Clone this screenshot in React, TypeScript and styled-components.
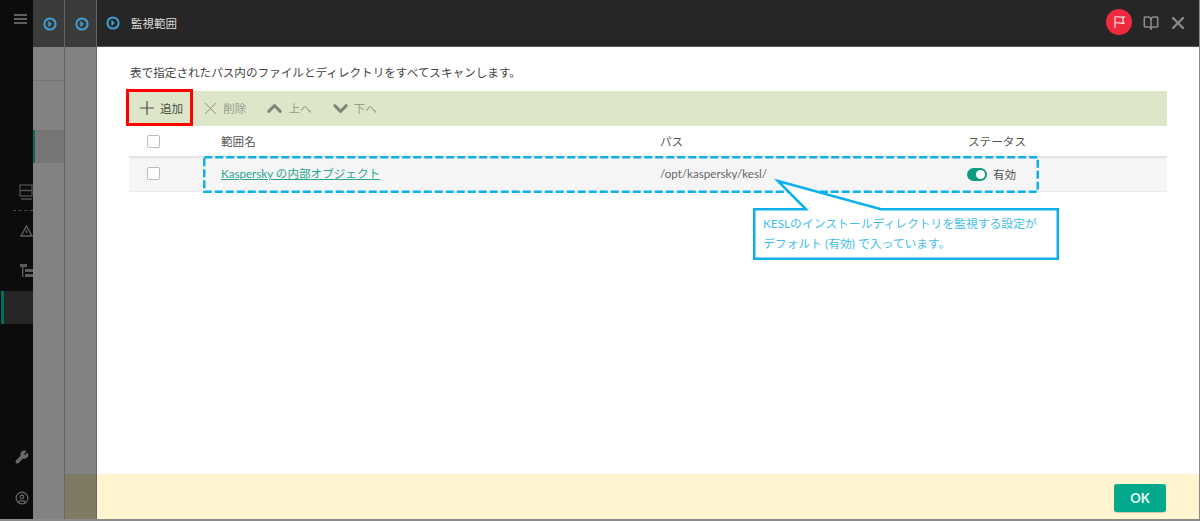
import { ReactElement } from 'react'
import styled, { createGlobalStyle } from 'styled-components'
import { BookOpen, ChevronDown, ChevronUp, CircleUser, Plus, Wrench, X } from 'lucide-react'

const fontStack = `"Lato", "Noto Sans CJK JP", sans-serif`

function PanelIcon(): ReactElement {
  return (
    <svg width="14" height="14" viewBox="0 0 14 14" fill="none">
      <circle cx="7" cy="7" r="5.6" stroke="#3f9fd4" strokeWidth="2" />
      <path d="M5.8 4.6 8.3 7 5.8 9.4Z" fill="#3f9fd4" stroke="#3f9fd4" strokeWidth="0.8" />
    </svg>
  )
}

function App(): ReactElement {
  return (
    <Screen>
      <GlobalStyle />
      <Sidebar>
        <Hamburger />
        <SideGlyphs>
          <svg width="14" height="17" viewBox="0 0 14 17" fill="none" stroke="#505050" strokeWidth="1.3">
            <rect x="1" y="1" width="12" height="11" />
            <path d="M1 6.5h12M2 15h11" />
          </svg>
          <DottedRule />
          <svg width="13" height="12" viewBox="0 0 13 12" fill="none" stroke="#5c5c5c" strokeWidth="1.4">
            <path d="M6.5 1 12 11H1Z" />
            <path d="M6.5 5v3" />
          </svg>
          <svg width="13" height="14" viewBox="0 0 13 14" fill="#5c5c5c">
            <rect x="0" y="0" width="7" height="3" />
            <rect x="2" y="3" width="1.4" height="10" />
            <rect x="5" y="5" width="8" height="3" />
            <rect x="5" y="10" width="8" height="3" />
          </svg>
        </SideGlyphs>
        <SideActive />
        <SideFooter>
          <Wrench size={14} color="#6a6a6a" fill="#6a6a6a" />
          <CircleUser size={14} color="#6a6a6a" />
        </SideFooter>
      </Sidebar>

      <StackPanel>
        <StackHeader>
          <PanelIcon />
        </StackHeader>
        <StackBody>
          <StackRule />
          <StackActive />
        </StackBody>
      </StackPanel>

      <StackPanel>
        <StackHeader>
          <PanelIcon />
        </StackHeader>
        <StackBody />
        <StackFooter />
      </StackPanel>

      <Dialog>
        <Header>
          <PanelIcon />
          <Title>監視範囲</Title>
          <HeaderActions>
            <FlagBadge>
              <svg width="13" height="14" viewBox="0 0 13 14" fill="none" stroke="#ffd6da" strokeWidth="1.3">
                <path d="M2 13V2c3-1.2 5 1 9 0l-1.6 3L11 8c-4 1-6-1.2-9 0" />
              </svg>
            </FlagBadge>
            <BookOpen size={16} color="#8b8b8b" strokeWidth={2.4} />
            <CloseGlyph size={20} color="#8b8b8b" strokeWidth={2.8} />
          </HeaderActions>
        </Header>

        <Content>
          <Intro>表で指定されたパス内のファイルとディレクトリをすべてスキャンします。</Intro>
          <Toolbar>
            <ToolButton>
              <Plus size={22} strokeWidth={1.3} />
              追加
            </ToolButton>
            <ToolButton $disabled>
              <X size={21} strokeWidth={1.2} />
              削除
            </ToolButton>
            <ToolButton $disabled>
              <ChevronUp size={23} strokeWidth={3} color="#7f8578" />
              上へ
            </ToolButton>
            <ToolButton $disabled>
              <ChevronDown size={23} strokeWidth={3} color="#7f8578" />
              下へ
            </ToolButton>
          </Toolbar>
          <HeadRow>
            <CheckCell>
              <CheckBox />
            </CheckCell>
            <span>範囲名</span>
            <span>パス</span>
            <span>ステータス</span>
          </HeadRow>
          <BodyRow>
            <CheckCell>
              <CheckBox />
            </CheckCell>
            <ScopeLink>Kaspersky の内部オブジェクト</ScopeLink>
            <span>/opt/kaspersky/kesl/</span>
            <StatusCell>
              <Toggle />
              有効
            </StatusCell>
          </BodyRow>
        </Content>

        <Footer>
          <OkButton>OK</OkButton>
        </Footer>
      </Dialog>

      <RedFrame />
      <DashedFrame width="836" height="37" viewBox="0 0 836 37">
        <rect x="1.25" y="1.25" width="833.5" height="34.5" fill="none" stroke="#0eb0ec" strokeWidth="2.5" strokeDasharray="8 3" />
      </DashedFrame>
      <CalloutShape width="312" height="84" viewBox="0 0 312 84">
        <path
          d="M28 5 56 33.25H4.25V82.75H307.75V33.25H131Z"
          fill="#fff"
          stroke="#0eb0ec"
          strokeWidth="2.5"
        />
      </CalloutShape>
      <CalloutText>
        KESLのインストールディレクトリを監視する設定が
        <br />
        デフォルト (有効) で入っています。
      </CalloutText>
    </Screen>
  )
}

export default App

const GlobalStyle = createGlobalStyle`
  html, body {
    margin: 0;
    padding: 0;
    background: #fff;
  }
  * {
    box-sizing: border-box;
  }
`

const Screen = styled.div`
  position: relative;
  display: flex;
  width: 1200px;
  height: 521px;
  overflow: hidden;
  border-right: 1px solid #8a8a8a;
  border-bottom: 2px solid #8a8a8a;
  font-family: ${fontStack};
  font-size: 11.6px;
  color: #4d4d4d;
`

const Sidebar = styled.div`
  display: flex;
  flex-direction: column;
  flex: 0 0 33px;
  background: #0c0c0c;
`

const Hamburger = styled.div`
  width: 13px;
  height: 10px;
  margin: 14px 0 0 14px;
  border-top: 2px solid #5f5f5f;
  border-bottom: 2px solid #5f5f5f;
  position: relative;

  &::after {
    content: '';
    position: absolute;
    left: 0;
    right: 0;
    top: 2px;
    height: 2px;
    background: #5f5f5f;
  }
`

const SideGlyphs = styled.div`
  display: flex;
  flex-direction: column;
  align-items: flex-end;
  margin-top: 160px;
  height: 104px;

  & > svg:nth-child(3) {
    margin-top: 14px;
  }
  & > svg:nth-child(4) {
    margin-top: 27px;
  }
`

const DottedRule = styled.div`
  width: 20px;
  margin-top: 9px;
  border-top: 1px dashed #4c4c4c;
`

const SideActive = styled.div`
  height: 33px;
  margin-top: 3px;
  margin-left: 1px;
  background: #262626;
  border-left: 3px solid #006f5f;
`

const SideFooter = styled.div`
  display: flex;
  flex-direction: column;
  align-items: flex-end;
  gap: 27px;
  margin-top: auto;
  padding: 0 4px 14px 0;
`

const StackPanel = styled.div`
  display: flex;
  flex-direction: column;
  flex: 0 0 32px;
  border-right: 1px solid #666;
  background: #828282;
`

const StackHeader = styled.div`
  display: flex;
  align-items: center;
  justify-content: center;
  flex: 0 0 47px;
  padding-left: 2px;
  background: #3b3b3b;
`

const StackBody = styled.div`
  display: flex;
  flex-direction: column;
  flex: 1;
`

const StackRule = styled.div`
  height: 1px;
  margin-top: 33px;
  background: #747474;
`

const StackActive = styled.div`
  height: 33px;
  margin-top: 49px;
  background: #767676;
  border-left: 2px solid #006f5f;
`

const StackFooter = styled.div`
  flex: 0 0 45px;
  background: #7e7a64;
`

const Dialog = styled.div`
  display: flex;
  flex-direction: column;
  flex: 1;
  min-width: 0;
  background: #fff;
`

const Header = styled.div`
  display: flex;
  align-items: center;
  gap: 11px;
  flex: 0 0 47px;
  padding: 0 11px 0 9px;
  background: #262626;
  border-bottom: 1px solid #555;
`

const Title = styled.div`
  color: #dcdcdc;
  font-size: 11.5px;
`

const HeaderActions = styled.div`
  display: flex;
  align-items: center;
  gap: 8px;
  margin-left: auto;
`

const CloseGlyph = styled(X)`
  margin-left: 1px;
`

const FlagBadge = styled.div`
  display: flex;
  align-items: center;
  justify-content: center;
  width: 26px;
  height: 26px;
  border-radius: 50%;
  background: #ef2a3f;
  margin: 0 3px 2px 0;
`

const Content = styled.div`
  flex: 1;
  padding: 18px 32px 0 32px;
`

const Intro = styled.div`
  height: 26px;
  padding-left: 1px;
  line-height: 16px;
  color: #444;
`

const Toolbar = styled.div`
  display: flex;
  align-items: center;
  gap: 21px;
  height: 35px;
  padding-left: 11px;
  background: #dde6c9;
`

const ToolButton = styled.div<{ $disabled?: boolean }>`
  display: flex;
  align-items: center;
  gap: 6px;
  margin-top: -1px;
  color: ${(p) => (p.$disabled ? '#989e8e' : '#4a4d44')};

  & > svg {
    margin: -4px;
  }
`

const HeadRow = styled.div`
  display: grid;
  grid-template-columns: 92px 439px 308px 1fr;
  align-items: center;
  height: 32px;
  border-bottom: 2px solid #e4e4e4;
  color: #555;
`

const BodyRow = styled(HeadRow)`
  height: 34px;
  padding-bottom: 3px;
  border-bottom: 1px solid #ebebeb;
  background: #f5f5f5;
  color: #666;
`

const CheckCell = styled.div`
  display: flex;
  padding-left: 18px;
`

const CheckBox = styled.div`
  width: 13px;
  height: 13px;
  border: 1px solid #bcbcbc;
  border-radius: 2px;
  background: #fff;
`

const ScopeLink = styled.a`
  color: #2ba58e;
  text-decoration: underline;
  justify-self: start;
`

const StatusCell = styled.div`
  display: flex;
  align-items: center;
  gap: 6px;
  margin: 2px 0 0 -1px;
  color: #555;
`

const Toggle = styled.div`
  position: relative;
  width: 20px;
  height: 13px;
  border-radius: 7px;
  background: #0d9d7c;

  &::after {
    content: '';
    position: absolute;
    top: 2px;
    right: 2px;
    width: 9px;
    height: 9px;
    border-radius: 50%;
    background: #fff;
  }
`

const Footer = styled.div`
  display: flex;
  align-items: flex-start;
  justify-content: flex-end;
  flex: 0 0 45px;
  padding: 10px 33px 0 0;
  background: #fff5d0;
`

const OkButton = styled.div`
  display: flex;
  align-items: center;
  justify-content: center;
  width: 52px;
  height: 28px;
  border-radius: 3px;
  background: #04a98b;
  box-shadow: 0 1px 1px rgba(0, 0, 0, 0.2);
  color: #e6fbf5;
  font-size: 13px;
  font-weight: 700;
`

const RedFrame = styled.div`
  position: absolute;
  left: 126px;
  top: 89px;
  width: 67px;
  height: 37px;
  border: 3px solid #f00;
`

const DashedFrame = styled.svg`
  position: absolute;
  left: 203px;
  top: 156px;
`

const CalloutShape = styled.svg`
  position: absolute;
  left: 750px;
  top: 176px;
`

const CalloutText = styled.div`
  position: absolute;
  left: 763px;
  top: 214px;
  color: #45bdeb;
  font-size: 11.8px;
  line-height: 19.5px;
  white-space: nowrap;
`
